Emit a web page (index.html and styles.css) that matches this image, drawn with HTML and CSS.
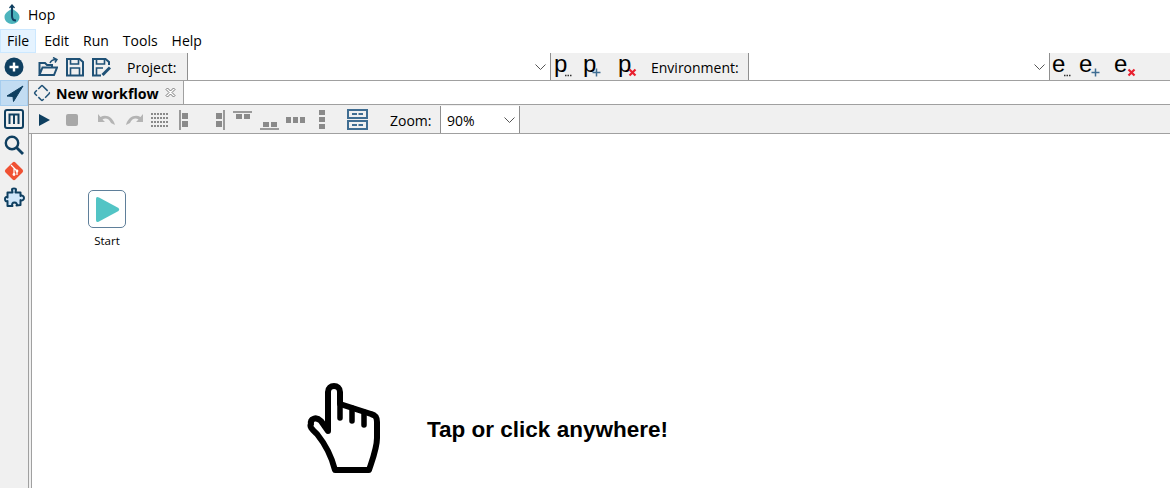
FILE: index.html
```html
<!DOCTYPE html>
<html lang="en">
<head>
  <meta charset="UTF-8" />
  <title>Hop</title>
  <link rel="stylesheet" href="styles.css">
</head>
<body>
  <div class="titlebar">
    <svg class="logo" width="16" height="20" viewBox="0 0 16 20">
      <path d="M8 4 C10 7 15.500 8 15.500 13 C15.500 17 12 20 8 20 C4 20 .5 17 .5 13 C.5 8 6 7 8 4 Z" fill="#4cb4bd"/>
      <path d="M8 1 V12 C8 15 9.500 16.500 12 16.500" fill="none" stroke="#0f3f60" stroke-width="2"/>
      <path d="M5.500 4 L8 1 L10.500 4" fill="none" stroke="#0f3f60" stroke-width="1.300"/>
    </svg>
    <span>Hop</span>
  </div>

  <nav class="menubar">
    <div class="menu-item active">File</div>
    <div class="menu-item">Edit</div>
    <div class="menu-item">Run</div>
    <div class="menu-item">Tools</div>
    <div class="menu-item">Help</div>
  </nav>

  <div class="main">
    <!-- perspective switcher -->
    <div class="sidebar">
      <div class="side-btn">
        <svg width="20" height="20" viewBox="0 0 20 20">
          <circle cx="10" cy="10" r="9.500" fill="#0f3f60"/>
          <path d="M10 5.500 V14.500 M5.500 10 H14.500" stroke="#fff" stroke-width="2.400"/>
        </svg>
      </div>
      <div class="side-btn selected">
        <svg width="20" height="20" viewBox="0 0 20 20">
          <path d="M19 3 L3 13 L9 13.500 L9.500 18.500 Z" fill="#0f3f60" stroke="#0f3f60" stroke-linejoin="round"/>
        </svg>
      </div>
      <div class="side-btn">
        <svg width="20" height="20" viewBox="0 0 20 20">
          <rect x="1" y="1" width="18" height="18" rx="2" fill="none" stroke="#0f3f60" stroke-width="2"/>
          <path d="M5.500 15 V5.500 H14.500 V15 M10 5.500 V15" fill="none" stroke="#0f3f60" stroke-width="2"/>
        </svg>
      </div>
      <div class="side-btn">
        <svg width="20" height="20" viewBox="0 0 20 20">
          <circle cx="8" cy="8" r="6.200" fill="none" stroke="#0f3f60" stroke-width="2.400"/>
          <path d="M12.500 12.500 L19 19" stroke="#0f3f60" stroke-width="2.800"/>
        </svg>
      </div>
      <div class="side-btn">
        <svg width="20" height="20" viewBox="0 0 20 20">
          <rect x="3" y="3" width="14" height="14" rx="2" transform="rotate(45 10 10)" fill="#f05133"/>
          <path d="M7 4 L13 10 V14 M10 7 V13" fill="none" stroke="#fff" stroke-width="1.200"/>
          <circle cx="13" cy="10" r="1.400" fill="#fff"/>
          <circle cx="10" cy="13.500" r="1.400" fill="#fff"/>
        </svg>
      </div>
      <div class="side-btn">
        <svg width="21" height="21" viewBox="0 0 21 21">
          <path d="M8 2.500 C8 1 12 1 12 2.500 L11.500 5.500 L16.500 5.500 L16.500 9 C18 8 20 9 20 11 C20 13 18 14 16.500 13 L16.500 18 L12.500 18.500 C13.500 17 12.500 15.500 10.500 15.500 C8.500 15.500 7.500 17 8.500 19 L3.500 19 L3.500 14 C2 15 1 13.500 1 12 C1 10 2.500 9.500 3.500 10.500 L3.500 5.500 L8.500 5.500 Z" fill="#cfe6fa" stroke="#0f3f60" stroke-width="2" stroke-linejoin="round"/>
        </svg>
      </div>
    </div>

    <div class="content">
      <div class="toolbar top">
        <div class="tool-group files">
          <svg width="20" height="20" viewBox="0 0 20 20">
            <path d="M1.500 18 V6 H7 L9 8 H14 V10 M1.500 18 L4.500 10.500 H19 L16 18 Z" fill="none" stroke="#1f5176" stroke-width="2"/>
            <path d="M12 6 C13 3.500 15 2.500 18 2.500 M15 0.500 L19 2.500 L17 5.500" fill="none" stroke="#1f5176" stroke-width="1.500"/>
          </svg>
          <svg width="18" height="20" viewBox="0 0 18 20">
            <path d="M1 2 H13.500 L17 5 V18.500 H1 Z" fill="none" stroke="#1f5176" stroke-width="2"/>
            <path d="M4.500 2 V7 H12.500 V2 M4.500 18 V11 H13.500 V18" fill="none" stroke="#1f5176" stroke-width="1.600"/>
          </svg>
          <svg width="19" height="20" viewBox="0 0 19 20">
            <path d="M9 18.500 H1 V2 H13.500 L17 5 V8" fill="none" stroke="#1f5176" stroke-width="2"/>
            <path d="M4.500 2 V7 H12.500 V2 M4.500 18 V11 H11" fill="none" stroke="#1f5176" stroke-width="1.600"/>
            <path d="M10.500 18 L18 10.500" stroke="#1f5176" stroke-width="3"/>
          </svg>
        </div>
        <label class="combo-label project-label">Project:</label>
        <div class="combo project-combo"><svg class="chevron" width="11" height="6" viewBox="0 0 11 6"><path d="M.5 .5 L5.500 5.500 L10.500 .5" fill="none" stroke="#555"/></svg></div>
        <div class="letters project-letters">
          <span class="letter">p<svg class="sub" width="9" height="9" viewBox="0 0 9 9"><path d="M1 7.500 H8" stroke="#333" stroke-width="1.500" stroke-dasharray="1.500 1"/></svg></span>
          <span class="letter">p<svg class="sub" width="9" height="9" viewBox="0 0 9 9"><path d="M4.500 .5 V8.500 M.5 4.500 H8.500" stroke="#3f6d92" stroke-width="1.500"/></svg></span>
          <span class="letter">p<svg class="sub" width="9" height="9" viewBox="0 0 9 9"><path d="M1.500 1.500 L7.500 7.500 M7.500 1.500 L1.500 7.500" stroke="#e8202f" stroke-width="2.200"/></svg></span>
        </div>
        <label class="combo-label env-label">Environment:</label>
        <div class="combo env-combo"><svg class="chevron" width="11" height="6" viewBox="0 0 11 6"><path d="M.5 .5 L5.500 5.500 L10.500 .5" fill="none" stroke="#555"/></svg></div>
        <div class="letters env-letters">
          <span class="letter">e<svg class="sub" width="9" height="9" viewBox="0 0 9 9"><path d="M1 7.500 H8" stroke="#333" stroke-width="1.500" stroke-dasharray="1.500 1"/></svg></span>
          <span class="letter">e<svg class="sub" width="9" height="9" viewBox="0 0 9 9"><path d="M4.500 .5 V8.500 M.5 4.500 H8.500" stroke="#3f6d92" stroke-width="1.500"/></svg></span>
          <span class="letter">e<svg class="sub" width="9" height="9" viewBox="0 0 9 9"><path d="M1.500 1.500 L7.500 7.500 M7.500 1.500 L1.500 7.500" stroke="#e8202f" stroke-width="2.200"/></svg></span>
        </div>
      </div>

      <div class="tabbar">
        <div class="tab">
          <svg width="18" height="18" viewBox="0 0 18 18">
            <rect x="3.500" y="3.500" width="11" height="11" rx="1" transform="rotate(45 9 9)" fill="none" stroke="#1f5176" stroke-width="1.500" stroke-dasharray="7 2"/>
          </svg>
          <span class="tab-title">New workflow</span>
          <svg class="tab-close" width="11" height="11" viewBox="0 0 11 11">
            <path d="M1 2.500 L2.500 1 L5.500 4 L8.500 1 L10 2.500 L7 5.500 L10 8.500 L8.500 10 L5.500 7 L2.500 10 L1 8.500 L4 5.500 Z" fill="#fff" stroke="#777"/>
          </svg>
        </div>
      </div>

      <div class="toolbar second">
        <svg class="t-run" width="11" height="12" viewBox="0 0 11 12"><path d="M0 0 L11 6 L0 12 Z" fill="#0f3f60"/></svg>
        <svg class="t-stop" width="12" height="12" viewBox="0 0 12 12"><rect width="12" height="12" rx="2" fill="#a8a8a8"/></svg>
        <svg class="t-undo" width="19" height="12" viewBox="0 0 19 12"><path d="M1 0 V8 H8 L5.500 5.500 C8 3.500 12 4 14 9 L18 11 C16 3 9 0 3.500 3 Z" fill="#b4b4b4"/></svg>
        <svg class="t-redo" width="19" height="12" viewBox="0 0 19 12"><path d="M18 0 V8 H11 L13.500 5.500 C11 3.500 7 4 5 9 L1 11 C3 3 10 0 15.500 3 Z" fill="#b4b4b4"/></svg>
        <svg class="t-grid" width="18" height="14" viewBox="0 0 18 14"><path d="M0 1 H18 M0 5 H18 M0 9 H18 M0 13 H18" stroke="#8a8a8a" stroke-width="2" stroke-dasharray="2 1"/></svg>
        <svg class="t-left" width="9" height="20" viewBox="0 0 9 20"><path d="M1 0 V20" stroke="#9a9a9a" stroke-width="2"/><rect x="3" y="3" width="6" height="6" fill="#8a8a8a"/><rect x="3" y="11" width="6" height="6" fill="#8a8a8a"/></svg>
        <svg class="t-right" width="9" height="20" viewBox="0 0 9 20"><path d="M8 0 V20" stroke="#9a9a9a" stroke-width="2"/><rect x="0" y="3" width="6" height="6" fill="#8a8a8a"/><rect x="0" y="11" width="6" height="6" fill="#8a8a8a"/></svg>
        <svg class="t-top" width="19" height="9" viewBox="0 0 19 9"><path d="M0 1 H19" stroke="#9a9a9a" stroke-width="2"/><rect x="3" y="3" width="6" height="5" fill="#8a8a8a"/><rect x="11" y="3" width="6" height="5" fill="#8a8a8a"/></svg>
        <svg class="t-bottom" width="19" height="9" viewBox="0 0 19 9"><path d="M0 8 H19" stroke="#9a9a9a" stroke-width="2"/><rect x="3" y="1" width="6" height="5" fill="#8a8a8a"/><rect x="11" y="1" width="6" height="5" fill="#8a8a8a"/></svg>
        <svg class="t-hdist" width="19" height="6" viewBox="0 0 19 6"><path d="M0 3 H19" stroke="#8a8a8a" stroke-width="6" stroke-dasharray="5 2"/></svg>
        <svg class="t-vdist" width="6" height="19" viewBox="0 0 6 19"><path d="M3 0 V19" stroke="#8a8a8a" stroke-width="6" stroke-dasharray="5 2"/></svg>
        <svg class="t-snap" width="21" height="21" viewBox="0 0 21 21">
          <rect x="1" y="1" width="19" height="8" fill="none" stroke="#3f6d92" stroke-width="2"/>
          <rect x="1" y="12" width="19" height="8" fill="none" stroke="#3f6d92" stroke-width="2"/>
          <path d="M5 5 H10 M11.500 5 H16 M5 16 H10 M11.500 16 H16" stroke="#3f6d92" stroke-width="2"/>
        </svg>
        <label class="combo-label zoom-label">Zoom:</label>
        <div class="combo zoom-combo"><span class="combo-value">90%</span><svg class="chevron" width="11" height="6" viewBox="0 0 11 6"><path d="M.5 .5 L5.500 5.500 L10.500 .5" fill="none" stroke="#555"/></svg></div>
      </div>

      <div class="canvas-area">
        <div class="canvas">
          <div class="action">
            <div class="action-box">
              <svg width="24" height="27" viewBox="0 0 24 27">
                <path d="M0 3 L0 24 Q0 27 3 25.500 L22.500 15 Q24 13.500 22.500 12 L3 1.500 Q0 0 0 3 Z" fill="#52c4c5"/>
              </svg>
            </div>
            <span class="action-name">Start</span>
          </div>
          <div class="hint">
            <svg width="78" height="96" viewBox="0 0 78 96">
              <path d="M30 90 H64 C68 78 72 68 72 58 V42 C72 37 70 35 66 34 L35 24 V12 C35 4 23 4 23 12 V51 L16 41 C11 36 5 39 6 44 C4 47 8 50 12 54 C20 64 27 78 30 90 Z" fill="#fff" stroke="#000" stroke-width="6" stroke-linejoin="round"/>
              <path d="M35 24 V38 M47 28 V41 M59 32 V45" fill="none" stroke="#000" stroke-width="5.500" stroke-linecap="round"/>
            </svg>
            <span class="hint-text">Tap or click anywhere!</span>
          </div>
        </div>
      </div>
    </div>
  </div>
</body>
</html>
```

FILE: styles.css
```css
* {
  margin: 0;
  padding: 0;
  box-sizing: border-box;
}

html,
body {
  height: 100%;
  overflow: hidden;
}

body {
  background: #fff;
  color: #000;
  font-family: "Open Sans", sans-serif;
  font-size: 14px;
  display: flex;
  flex-direction: column;
}

/* title + menu */
.titlebar {
  height: 28px;
  display: flex;
  align-items: center;
  gap: 8px;
  padding-left: 4px;
  flex-shrink: 0;
}

.menubar {
  height: 25px;
  display: flex;
  flex-shrink: 0;
}

.menu-item {
  padding: 1px 6px 0;
  margin-top: 1px;
  border: 1px solid transparent;
}

.menu-item.active {
  background: #e5f3ff;
  border-color: #cce8ff;
  margin-right: 1px;
}

.main {
  flex: 1;
  display: flex;
  min-height: 0;
}

/* left switcher */
.sidebar {
  width: 28px;
  background: #f0f0f0;
  display: flex;
  flex-direction: column;
  padding-top: 1px;
  flex-shrink: 0;
}

.side-btn {
  height: 26px;
  display: flex;
  align-items: center;
  justify-content: center;
}

.side-btn.selected {
  background: #c2dcf2;
  border: 1px solid #a6cdee;
}

.content {
  flex: 1;
  display: flex;
  flex-direction: column;
  min-width: 0;
}

.toolbar {
  display: flex;
  align-items: center;
  background: #f0f0f0;
  flex-shrink: 0;
}

.toolbar.top {
  height: 28px;
  border-bottom: 1px solid #a0a0a0;
}

.tool-group {
  display: flex;
  align-items: center;
  gap: 8px;
  padding-left: 10px;
}

.combo-label,
.combo-value {
  margin-top: 2px;
}

.project-label {
  margin-left: 16px;
  width: 60px;
}

.env-label {
  width: 97px;
}

.combo {
  height: 100%;
  background: #fff;
  border-left: 1px solid #8f8f8f;
  border-right: 1px solid #8f8f8f;
  position: relative;
  display: flex;
  align-items: center;
}

.project-combo {
  width: 364px;
}

.env-combo {
  width: 302px;
}

.chevron {
  position: absolute;
  right: 4px;
  top: 50%;
  margin-top: -3px;
}

.letters {
  display: flex;
  align-items: center;
}

.letter {
  font-family: "Liberation Sans", sans-serif;
  font-size: 24px;
  line-height: 26px;
  position: relative;
  margin-top: -6px;
  padding-left: 3px;
  width: 28px;
}

.project-letters .letter:nth-child(2) {
  padding-left: 4px;
}

.project-letters .letter:last-child {
  padding-left: 11px;
  width: 44px;
}

.env-letters .letter {
  padding-left: 2px;
}

.env-letters .letter:nth-child(2) {
  padding-left: 1px;
}

.env-letters .letter:last-child {
  padding-left: 8px;
  width: 32px;
}

.sub {
  position: absolute;
  left: 13px;
  top: 17px;
}

.letter:last-child .sub {
  left: 21px;
}

/* tab row */
.tabbar {
  height: 24px;
  display: flex;
  background: #fff;
  border-left: 1px solid #a0a0a0;
  border-bottom: 1px solid #a0a0a0;
  flex-shrink: 0;
}

.tab {
  width: 155px;
  background: #f0f0f0;
  border-right: 1px solid #a0a0a0;
  display: flex;
  align-items: center;
  padding-left: 4px;
}

.tab-title {
  font-weight: bold;
  font-size: 14.200px;
  margin-left: 5px;
  margin-top: 2px;
  width: 109px;
}

.toolbar.second {
  height: 29px;
  padding-top: 1px;
  border-left: 1px solid #a0a0a0;
  border-bottom: 1px solid #a0a0a0;
}

.t-run { margin-left: 10px; }
.t-stop { margin-left: 16px; }
.t-undo { margin-left: 19px; }
.t-redo { margin-left: 9px; }
.t-grid { margin-left: 7px; }
.t-left { margin-left: 10px; }
.t-right { margin-left: 28px; }
.t-top { margin-left: 8px; margin-top: -9px; }
.t-bottom { margin-left: 8px; margin-top: 11px; }
.t-hdist { margin-left: 7px; }
.t-vdist { margin-left: 14px; }
.t-snap { margin-left: 22px; }
.zoom-label { margin-left: 22px; width: 50px; }

.zoom-combo {
  width: 80px;
  padding-left: 6px;
}

/* workflow canvas */
.canvas-area {
  flex: 1;
  display: flex;
  background: #f0f0f0;
  border-left: 1px solid #a0a0a0;
  padding-left: 2px;
}

.canvas {
  flex: 1;
  position: relative;
  background: #fff;
  border-left: 1px solid #a0a0a0;
}

.action {
  position: absolute;
  left: 56px;
  top: 56px;
  width: 38px;
  display: flex;
  flex-direction: column;
  align-items: center;
}

.action-box {
  width: 38px;
  height: 38px;
  border: 1px solid #5f7f9a;
  border-radius: 5px;
  display: flex;
  align-items: center;
  justify-content: center;
  padding-left: 2px;
}

.action-name {
  font-size: 11.500px;
  margin-top: 5px;
}

.hint {
  position: absolute;
  left: 273px;
  top: 246px;
  display: flex;
  align-items: center;
}

.hint-text {
  font-family: "Liberation Sans", sans-serif;
  font-weight: bold;
  font-size: 22.500px;
  margin-left: 44px;
  margin-top: 4px;
}
```
